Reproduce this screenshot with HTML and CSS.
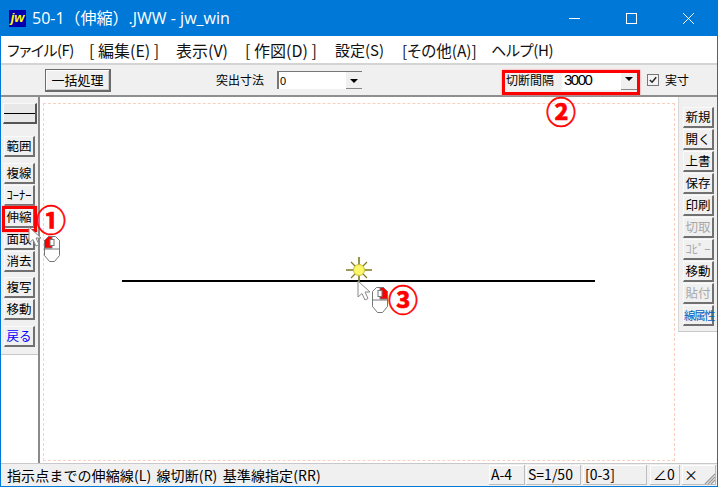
FILE: index.html
```html
<!DOCTYPE html>
<html lang="ja">
<head>
<meta charset="utf-8">
<title>50-1(伸縮).JWW - jw_win</title>
<link rel="stylesheet" href="styles.css">
</head>
<body>
<div class="window">
  <header class="titlebar">
    <div class="logo">jw</div>
    <div class="title">50-1（伸縮）.JWW - jw_win</div>
    <div class="winctl">
      <svg class="ctl" viewBox="0 0 57 36"><path d="M23 18.500h11" stroke="#fff" fill="none"/></svg>
      <svg class="ctl" viewBox="0 0 57 36"><rect x="23.500" y="13.500" width="10" height="10" stroke="#fff" fill="none"/></svg>
      <svg class="ctl" viewBox="0 0 57 36"><path d="M23 13l11 11M34 13L23 24" stroke="#fff" fill="none"/></svg>
    </div>
  </header>
  <nav class="menu">
    <span class="m1">ファイル(F)</span>
    <span class="m2">[ 編集(E) ]</span>
    <span class="m3">表示(V)</span>
    <span class="m4">[ 作図(D) ]</span>
    <span class="m5">設定(S)</span>
    <span class="m6">[その他(A)]</span>
    <span class="m7">ヘルプ(H)</span>
  </nav>
  <div class="toolbar">
    <button class="batch">一括処理</button>
    <span class="lbl lbl-proj">突出寸法</span>
    <div class="combo combo-proj"><span class="val small">0</span><span class="arrow"></span></div>
    <div class="cutgroup">
      <span class="lbl lbl-cut">切断間隔</span>
      <div class="combo combo-cut"><span class="val">3000</span><span class="arrow"></span></div>
    </div>
    <span class="check"><svg viewBox="0 0 11 11"><path d="M2 5.500l2.500 2.500L9 2.500" stroke="#222" stroke-width="1.6" fill="none"/></svg></span>
    <span class="lbl lbl-real">実寸</span>
  </div>
  <main class="body">
    <aside class="side left">
      <div class="panel">
        <button class="tool linebtn"><i></i></button>
        <button class="tool g1">範囲</button>
        <button class="tool g2">複線</button>
        <button class="tool">ｺｰﾅｰ</button>
        <button class="tool">伸縮</button>
        <button class="tool">面取</button>
        <button class="tool">消去</button>
        <button class="tool g3">複写</button>
        <button class="tool">移動</button>
        <button class="tool g4 blue">戻る</button>
      </div>
    </aside>
    <section class="canvas">
      <div class="sheet"></div>
      <div class="drawn"></div>
      <svg class="sun" viewBox="0 0 26 26">
        <path d="M13 0v26M0 13h26" stroke="#807a20" stroke-width="1.600"/>
        <path d="M5 5l16 16M21 5L5 21" stroke="#807a20" stroke-width="1.200"/>
        <circle cx="13" cy="13" r="5.500" fill="#fbf66a" stroke="#c9c030"/>
      </svg>
    </section>
    <aside class="side right">
      <div class="panel">
        <button class="tool">新規</button>
        <button class="tool">開く</button>
        <button class="tool">上書</button>
        <button class="tool">保存</button>
        <button class="tool">印刷</button>
        <button class="tool off">切取</button>
        <button class="tool off">ｺﾋﾟｰ</button>
        <button class="tool">移動</button>
        <button class="tool off">貼付</button>
        <button class="tool attr">線属性</button>
      </div>
    </aside>
  </main>
  <footer class="status">
    <span class="msg">指示点までの伸縮線(L) 線切断(R) 基準線指定(RR)</span>
    <span class="cell c1">A-4</span>
    <span class="cell c2">S=1/50</span>
    <span class="cell c3">[0-3]</span>
    <span class="cell c4">∠0</span>
    <span class="cell c5">×</span>
    <svg class="grip" viewBox="0 0 12 12"><path d="M11 1L1 11M11 4L4 11M11 7L7 11" stroke="#999" stroke-width="1.200"/></svg>
  </footer>

  <div class="redbox rb-tool"></div>
  <div class="redbox rb-cut"></div>
  <span class="num n1">①</span>
  <span class="num n2">②</span>
  <span class="num n3">③</span>

  <svg class="cursor cur1" viewBox="0 0 14 22"><path d="M1 1v16l4-3.500 3 6.500 3-1.500-3-6.500h5z" fill="#fff" stroke="#8a8a8a"/></svg>
  <svg class="mouse mouse1" viewBox="0 0 18 26">
    <path d="M5.500 .5h7l4 4v15l-5 6h-5l-5-6v-15z" fill="#fff" stroke="#777"/>
    <path d="M5.500 .5H9V12H1.500V4.500z" fill="#f00" stroke="#777"/>
    <rect x="7" y="3.500" width="4" height="6" fill="#fff" stroke="#777"/>
    <path d="M1.500 13h15" stroke="#777"/>
  </svg>
  <svg class="cursor cur3" viewBox="0 0 14 22"><path d="M1 1v16l4-3.500 3 6.500 3-1.500-3-6.500h5z" fill="#fff" stroke="#8a8a8a"/></svg>
  <svg class="mouse mouse3" viewBox="0 0 18 26">
    <path d="M5.500 .5h7l4 4v15l-5 6h-5l-5-6v-15z" fill="#fff" stroke="#777"/>
    <path d="M9 .5h3.500l4 4V12H9z" fill="#f00" stroke="#777"/>
    <rect x="7" y="3.500" width="4" height="6" fill="#fff" stroke="#777"/>
    <path d="M1.500 13h15" stroke="#777"/>
  </svg>
</div>
</body>
</html>
```
FILE: styles.css
```css
* { box-sizing: border-box; }
html, body { margin: 0; padding: 0; }
body { width: 718px; height: 487px; overflow: hidden; background: #fff; font-family: "Noto Sans CJK JP", "Noto Sans", sans-serif; color: #000; }
.window { position: relative; width: 718px; height: 487px; border: 1px solid #0078d7; border-top: 0; display: flex; flex-direction: column; background: #f0f0f0; }

.titlebar { height: 36px; flex: none; background: #0078d7; color: #fff; display: flex; align-items: center; padding-left: 8px; }
.logo { width: 17px; height: 17px; background: #0000b0; color: #ff0; font: italic bold 13px/15px "Liberation Sans", sans-serif; text-align: center; overflow: hidden; }
.title { margin-left: 6px; font-size: 16px; line-height: 22px; white-space: nowrap; font-family: "Open Sans", "Noto Sans CJK JP", sans-serif; }
.winctl { margin-left: auto; display: flex; }
.ctl { width: 57px; height: 36px; display: block; }

.menu { height: 27px; flex: none; background: #fff; display: flex; align-items: center; font-size: 16px; white-space: nowrap; color: #111; font-feature-settings: "palt"; }
.menu span { display: block; }
.m1 { margin-left: 6px; width: 82px; font-size: 15px; letter-spacing: -.5px; }
.m2 { width: 87px; }
.m3 { width: 69px; }
.m4 { width: 90px; }
.m5 { width: 67px; font-size: 15px; }
.m6 { width: 89px; font-size: 15.500px; }
.m7 { width: 70px; font-size: 15px; letter-spacing: -.3px; }

.toolbar { height: 34px; flex: none; display: flex; align-items: center; border-top: 2px solid #d4d4d4; border-bottom: 2px solid #8e8e8e; background: #f0f0f0; }
button { font-family: inherit; padding: 0; color: #000; }
.batch { width: 66px; height: 23px; margin-left: 44px; background: #f0f0f0; font-size: 13px; line-height: 16px; border: 1px solid #6a6a6a; border-right-width: 2px; border-bottom-width: 2px; box-shadow: inset 1px 1px 0 #fff, inset -1px -1px 0 #ccc; }
.lbl { font-size: 12px; line-height: 16px; white-space: nowrap; }
.lbl-proj { margin-left: 105px; width: 61px; }
.combo { display: flex; align-items: center; background: #fff; }
.combo-proj { width: 85px; height: 18px; border-left: 2px solid #777; border-top: 1px solid #777; }
.val { font: 15px/18px "Liberation Sans", sans-serif; padding-left: 2px; flex: 1; letter-spacing: -1.500px; }
.val.small { font-size: 11px; letter-spacing: 0; padding-left: 1px; }
.arrow { width: 16px; align-self: stretch; background: #f0f0f0; position: relative; box-shadow: inset 0 -1px 0 #888; }
.arrow::after { content: ""; position: absolute; left: 4px; top: 7px; border: 4px solid transparent; border-top: 4px solid #000; border-bottom: 0; }
.cutgroup { display: flex; align-items: center; margin-left: 140px; padding-left: 4px; }
.lbl-cut { width: 56px; font-size: 12px; }
.combo-cut { width: 76px; height: 20px; }
.combo-cut .arrow { width: 17px; }
.check { width: 12px; height: 12px; border: 1px solid #777; background: #f4f4f4; margin-left: 9px; display: block; }
.check svg { display: block; width: 10px; height: 10px; }
.lbl-real { margin-left: 6px; font-size: 12px; }

.body { flex: 1; display: flex; min-height: 0; background: #fff; }
.side { flex: none; background: #fff; }
.side.left { width: 37px; }
.side.right { width: 39px; }
.panel { background: #f0f0f0; display: flex; flex-direction: column; align-items: center; }
.left .panel { height: 258px; padding-top: 6px; border-bottom: 1px solid #c8c8c8; }
.right .panel { height: 235px; padding-top: 10px; padding-left: 1px; gap: 1px; border-bottom: 1px solid #c8c8c8; border-left: 1px solid #d8d8d8; }
.tool { width: 31px; height: 21px; background: #f0f0f0; font-size: 12.500px; line-height: 16px; border: 1px solid; border-color: #fafafa #707070 #707070 #fafafa; border-right-width: 2px; border-bottom-width: 2px; display: block; white-space: nowrap; }
.left .tool { margin-top: 1px; }
.linebtn { width: 34px; height: 21px; position: relative; margin-top: 0 !important; border-color: #f8f8f8 #555 #555 #f8f8f8; background: #e8e8e8; }
.linebtn i { position: absolute; left: 0; right: 0; top: 9px; height: 1px; background: #000; }
.g1 { margin-top: 12px !important; }
.g2 { margin-top: 6px !important; }
.g3 { margin-top: 5px !important; }
.g4 { margin-top: 6px !important; }
.blue { color: #00f; }
.off { color: #a8a8a8; }
.attr { color: #0060c0; font-size: 11.500px; letter-spacing: -1.500px; }

.canvas { flex: 1; position: relative; background: #fff; border-left: 2px solid #8a8a8a; }
.sheet { position: absolute; left: 3px; top: 6px; width: 632px; height: 358px; border: 1px dashed #f9cfbf; }
.drawn { position: absolute; left: 82px; top: 183px; width: 473px; height: 2px; background: #000; }
.sun { position: absolute; left: 306px; top: 160px; width: 26px; height: 26px; }

.status { height: 23px; flex: none; position: relative; border-top: 1px solid #c8c8c8; background: #f0f0f0; font-size: 14px; }
.msg { position: absolute; left: 6px; top: 1px; line-height: 20px; white-space: nowrap; font-size: 14px; word-spacing: 2px; letter-spacing: .1px; }
.cell { position: absolute; top: 1px; height: 20px; line-height: 19px; font-size: 14px; padding-left: 2px; box-shadow: inset -1px -1px 0 #bdbdbd, inset 1px 1px 0 #fff; white-space: nowrap; }
.c1 { left: 488px; width: 36px; }
.c2 { left: 525px; width: 55px; }
.c3 { left: 582px; width: 64px; }
.c4 { left: 649px; width: 30px; padding-left: 3px; }
.c5 { left: 681px; width: 34px; }
.grip { position: absolute; right: 1px; bottom: 1px; width: 12px; height: 12px; }

.redbox { position: absolute; border: 3px solid #f00; box-shadow: 0 0 2px #f88; }
.rb-tool { left: 1px; top: 206px; width: 35px; height: 26px; }
.rb-cut { left: 501px; top: 70px; width: 138px; height: 25px; }
.num { position: absolute; color: #f00; font: bold 30px/30px "Noto Sans CJK JP", sans-serif; width: 30px; text-align: center; -webkit-text-stroke: .6px #f00; }
.n1 { left: 35px; top: 203px; }
.n2 { left: 545px; top: 95px; }
.n3 { left: 387px; top: 283px; }
.cursor { position: absolute; width: 14px; height: 22px; }
.cur1 { left: 27px; top: 226px; }
.cur3 { left: 356px; top: 280px; }
.mouse { position: absolute; width: 18px; height: 26px; }
.mouse1 { left: 42px; top: 236px; }
.mouse3 { left: 370px; top: 287px; }
```
